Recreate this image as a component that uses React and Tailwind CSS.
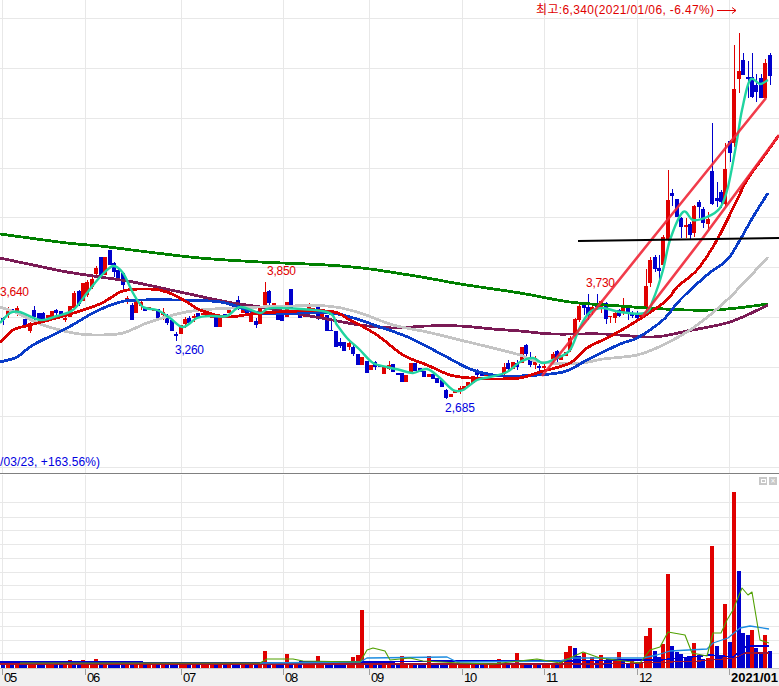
import React from "react";

const RED = "#e00000";
const BLUE = "#0000cc";

const gridX = [2, 85, 181, 283, 369, 462, 544, 637, 729];
const priceGridY = [18, 68, 118, 168, 217, 267, 317, 367, 416, 467];
const volumeGridY = [502, 517, 530, 544, 558, 572, 585, 599, 612, 626, 640, 653];

// color (1 red, 0 blue), body top, body bottom, wick top, wick bottom
const candles = [
  [0,318,320,317,325],[1,310,315,307,318],[0,309,313],[1,308,313,306,316],[0,312,314],[0,319,327],[1,323,331,322,333],[0,310,317,306,320],
  [0,313,320],[0,313,320,312,322],[1,315,318],[1,311,317],[0,310,313,309,315],[0,311,317],[1,318,320,315,322],[1,306,317],
  [1,293,308,291,310],[0,291,304,290,306],[1,283,301],[1,282,295,280,297],[1,279,287,277,289],[1,268,274,266,278],[0,257,275],[1,257,275],
  [0,250,265],[0,263,272,262,277],[0,270,278,268,281],[0,273,285,272,290],[1,298,300,296,304],[0,305,320,303,320],[1,301,313],[1,302,306,300,310],
  [0,308,311],[1,307,309],[1,309,311],[0,309,319],[1,312,315,308,320],[0,316,323,314,325],[0,320,331],[0,334,336,332,341],
  [1,325,334],[1,319,324,317,328],[0,318,323,316,325],[1,316,318,314,322],[0,313,317],[1,313,315],[1,312,317],[1,313,318],
  [0,317,327],[1,317,327],[0,314,318],[1,308,313],[0,302,308],[0,300,308,296,310],[1,305,313],[0,308,315],[1,315,322],[0,321,325,318,328],
  [1,308,324],[1,292,307,282,310],[0,291,303,290,305],[1,303,306],[0,315,320],[0,315,321],[1,302,317],[0,289,309],
  [1,310,313],[0,308,318],[1,313,317],[1,307,313,303,315],[1,308,312],[0,305,318,304,320],[1,313,318],[0,315,331],
  [0,330,331,318,331],[0,331,347],[0,342,346,338,348],[0,342,351],[1,343,347,340,350],[0,347,354,345,356],[0,354,365],[1,357,365],
  [0,361,373],[1,365,370],[0,362,367,361,370],[0,365,367],[1,367,374],[1,365,369,361,370],[0,364,372],[0,373,375],
  [0,373,382],[1,375,382],[1,363,372],[0,363,371],[0,368,372],[0,371,377],[1,374,377],[0,374,379],
  [0,378,383],[0,380,387],[0,390,398,389,399],[1,394,397],[1,391,393],[1,388,390,386,394],[1,386,389],[1,382,386],
  [1,376,383],[0,371,375,369,378],[0,373,376],[1,373,376],[1,374,376],[1,375,377],[0,374,377],[1,367,374,363,376],
  [0,363,369,360,372],[1,362,369],[0,363,367,360,370],[1,347,363],
  [0,345,354,344,356],[0,359,365,352,367],[1,358,365,356,369],[0,366,368,364,371],[1,366,368,363,371],[1,361,364],[1,354,359,352,362],[0,351,359,350,363],
  [1,355,360],[1,352,356],[1,338,350,336,352],[1,319,336,318,338],[1,306,320,303,322],[0,305,308,303,315],[0,307,315,294,320],[1,307,311,305,315],
  [0,303,307,294,310],[1,301,307,300,313],[0,303,319,302,324],[1,316,317,316,323],[1,313,318,312,323],[0,310,316,309,317],[1,308,313,298,315],[0,308,312,306,320],
  [0,314,316,311,318],[0,314,318,311,319],[1,315,317,313,318],[1,286,308,269,310],[1,260,283,257,287],[0,257,269,255,272],[0,268,271,255,279],[1,237,265,235,268],
  [1,200,239,170,241],[0,193,196,189,206],[0,199,217],[0,218,227,217,238],[1,225,227,218,238],[0,224,235,222,240],[1,206,233,205,237],[0,202,207,200,218],
  [0,209,223,207,228],[1,219,224,212,229],[0,171,204,123,205],[0,198,201,182,207],[0,192,202,190,208],[1,169,204,143,206],[0,141,153,140,162],[1,89,143,45,147],
  [1,71,79,33,93],[0,60,75,53,75],[0,77,79,61,98],[0,77,97,53,98],[0,85,92,74,102],[0,78,98,74,98],[1,63,98,59,98],[0,55,76,53,85],
];

// bars read off by hand: index -> [color, height]
const tallBars = {
  7: [1, 7], 15: [1, 8], 18: [1, 8], 21: [1, 9], 16: [0, 7], 59: [1, 17], 64: [1, 14], 71: [1, 12], 79: [1, 11], 80: [1, 13], 81: [1, 58],
  90: [1, 12], 96: [1, 12], 112: [1, 9], 116: [1, 15],
  126: [1, 7], 127: [1, 16], 128: [1, 22], 129: [0, 20], 130: [0, 12], 131: [1, 15], 132: [0, 8], 133: [1, 11], 134: [0, 7], 135: [1, 13],
  136: [0, 7], 137: [0, 7], 138: [1, 9], 139: [1, 16], 140: [0, 9], 141: [0, 5], 142: [1, 7], 143: [0, 4], 144: [1, 6], 145: [1, 32],
  146: [1, 40], 147: [0, 17], 148: [0, 11], 149: [1, 24], 150: [1, 94], 151: [0, 22], 152: [0, 16], 153: [0, 14], 154: [0, 11], 155: [0, 11],
  156: [1, 25], 157: [0, 12], 158: [0, 9], 159: [1, 10], 160: [1, 122], 161: [0, 22], 162: [0, 11], 163: [1, 64], 164: [0, 26], 165: [1, 176],
  166: [0, 97], 167: [0, 35], 168: [0, 33], 169: [1, 38], 170: [0, 20], 171: [0, 15], 172: [1, 33], 173: [0, 17],
};

const xOf = (i) => Math.round(3.3 + 4.43 * i);

// smooth line through points
function smooth(points) {
  let d = `M${points[0][0]} ${points[0][1]}`;
  for (let i = 0; i < points.length - 1; i++) {
    const p0 = points[i - 1] || points[i];
    const p1 = points[i];
    const p2 = points[i + 1];
    const p3 = points[i + 2] || p2;
    const c1x = p1[0] + (p2[0] - p0[0]) / 6;
    const c1y = p1[1] + (p2[1] - p0[1]) / 6;
    const c2x = p2[0] - (p3[0] - p1[0]) / 6;
    const c2y = p2[1] - (p3[1] - p1[1]) / 6;
    d += ` C${c1x.toFixed(1)} ${c1y.toFixed(1)} ${c2x.toFixed(1)} ${c2y.toFixed(1)} ${p2[0]} ${p2[1]}`;
  }
  return d;
}

const straight = (points) => "M" + points.map((p) => p.join(" ")).join("L");

const greenMa = [[0,234],[67,243],[100,246],[140,251],[200,258],[260,262],[327,265],[370,269],[427,278],[460,284],[520,293],[570,302],[620,306],[647,308],[687,310],[713,310],[737,308],[768,304]];
const purpleMa = [[0,258],[33,265],[67,272],[100,277],[133,282],[180,292],[227,302],[260,307],[293,313],[327,319],[360,325],[393,328],[427,326],[460,326],[493,329],[520,331],[553,334],[603,334],[653,337],[687,331],[730,322],[768,305]];
const grayMa = [[0,307],[17,313],[40,324],[60,330],[80,334],[100,335],[123,333],[147,323],[173,315],[200,310],[260,307],[327,306],[360,313],[393,325],[427,332],[460,340],[493,348],[520,355],[540,362],[580,363],[603,359],[637,355],[663,345],[693,328],[727,300],[768,257]];
const blueMa = [[0,362],[17,357],[33,345],[67,328],[93,313],[117,303],[140,300],[210,301],[233,305],[260,313],[327,313],[350,317],[380,327],[410,338],[443,355],[470,369],[493,375],[520,376],[563,372],[587,360],[620,344],[637,338],[663,320],[680,300],[707,275],[727,260],[740,240],[753,217],[768,193]];
const redMa = [[0,343],[13,330],[30,325],[67,315],[100,304],[123,291],[150,289],[167,292],[187,302],[200,310],[227,317],[260,313],[327,311],[350,320],[377,335],[403,355],[427,365],[450,375],[470,378],[487,379],[520,378],[540,372],[570,363],[587,348],[613,335],[643,317],[667,300],[677,287],[697,270],[717,240],[737,200],[747,180],[767,152],[779,135]];
const tealMa = [[0,323],[10,313],[20,312],[40,320],[57,316],[73,310],[87,293],[100,277],[113,266],[123,273],[133,293],[143,307],[157,310],[170,318],[183,327],[197,318],[210,316],[227,316],[240,307],[260,313],[267,309],[280,308],[327,312],[337,325],[347,338],[360,350],[373,363],[387,367],[400,370],[413,373],[427,369],[440,378],[453,390],[463,390],[477,380],[490,377],[507,372],[520,362],[533,358],[543,363],[557,358],[570,350],[580,327],[590,312],[603,308],[620,312],[645,313],[653,300],[663,270],[670,240],[683,212],[693,220],[707,217],[720,208],[728,187],[737,140],[742,110],[750,80],[760,84],[768,80]];

const volNavy = [[0,662],[142,662],[143,663],[367,662],[460,661],[560,661],[627,660],[660,660],[710,655],[733,657],[747,646],[769,646]];
const volRed = [[0,664],[400,664],[600,664],[640,663],[700,661],[735,658],[745,653],[769,653]];
const volSky = [[260,663],[360,662],[367,658],[447,657],[457,662],[560,661],[573,658],[643,658],[657,655],[670,651],[707,649],[713,643],[728,638],[740,628],[750,626],[769,629]];
const volGreen = [[20,663],[140,663],[260,663],[267,659],[293,659],[303,661],[360,662],[367,650],[373,648],[385,651],[390,660],[410,658],[423,661],[460,663],[493,664],[537,659],[560,663],[570,658],[583,652],[600,658],[640,663],[650,650],[660,647],[668,632],[685,635],[692,653],[707,656],[713,633],[721,633],[727,620],[733,610],[742,588],[748,595],[752,592],[760,640],[769,643]];

const months = [
  { label: "05", width: "w-[83px]" },
  { label: "06", width: "w-[96px]" },
  { label: "07", width: "w-[102px]" },
  { label: "08", width: "w-[86px]" },
  { label: "09", width: "w-[93px]" },
  { label: "10", width: "w-[82px]" },
  { label: "11", width: "w-[93px]" },
  { label: "12", width: "w-[92px]" },
  { label: "2021/01", width: "w-[50px]", bold: true },
];

function Grid({ ys, top, bottom }) {
  return (
    <g stroke="#e8e8e8" shapeRendering="crispEdges">
      {ys.map((y) => (
        <line key={y} x1="0" x2="779" y1={y + 0.5} y2={y + 0.5} />
      ))}
      {gridX.map((x) => (
        <line key={x} x1={x + 0.5} x2={x + 0.5} y1={top} y2={bottom} />
      ))}
    </g>
  );
}

function Candles() {
  return (
    <g shapeRendering="crispEdges">
      {candles.map((c, i) => {
        const x = xOf(i);
        const color = c[0] ? RED : BLUE;
        const hi = c[3] === undefined ? c[1] : c[3];
        const lo = c[4] === undefined ? c[2] : c[4];
        return (
          <g key={i}>
            <rect x={x} y={hi} width="1" height={lo - hi} fill={color} />
            <rect x={x - 2} y={c[1]} width="4" height={Math.max(c[2] - c[1], 1)} fill={color} />
          </g>
        );
      })}
    </g>
  );
}

function Line({ points, color, width = 2, rough, flat }) {
  return (
    <path
      d={flat ? straight(points) : smooth(points)}
      fill="none"
      stroke={color}
      strokeWidth={width}
      strokeLinejoin="round"
      shapeRendering={rough ? "crispEdges" : "auto"}
    />
  );
}

function Label({ x, y, w, children }) {
  return (
    <text x={x} y={y} textLength={w} lengthAdjust="spacing">
      {children}
    </text>
  );
}

function PriceChart() {
  return (
    <svg width="779" height="473" viewBox="0 0 779 473" className="block shrink-0 font-['Liberation_Sans','Noto_Sans_CJK_KR',sans-serif] text-[12px]">
      <Grid ys={priceGridY} top={0} bottom={473} />
      <Candles />
      <Line points={greenMa} color="#008000" width={2.8} rough />
      <Line points={purpleMa} color="#7a1a55" width={2.8} rough />
      <Line points={grayMa} color="#c4c4c4" width={2.8} rough />
      <Line points={blueMa} color="#0a3cc8" width={2.8} rough />
      <Line points={redMa} color="#d80000" width={2.8} rough />
      <Line points={tealMa} color="#20d4a0" width={2.4} />
      <g stroke="#f02838" strokeWidth="2.6" opacity="0.9" fill="none">
        <polyline points="542,376 652,239 766,98" />
        <polyline points="642,317 702,239 779,135" />
      </g>
      <line x1="578" y1="241" x2="779" y2="238" stroke="#000" strokeWidth="2" />
      <g className="fill-[#e00000]">
        <Label x={536} y={14} w={178}>최고:6,340(2021/01/06, -6.47%)</Label>
        <Label x={0} y={296} w={29}>3,640</Label>
        <Label x={267} y={275} w={29}>3,850</Label>
        <Label x={586} y={287} w={29}>3,730</Label>
      </g>
      <path d="M717 10.5H736M732 7.5l4 3-4 3" fill="none" stroke="#e00000" />
      <g className="fill-[#0000e0]">
        <Label x={175} y={354} w={29}>3,260</Label>
        <Label x={445} y={412} w={30}>2,685</Label>
        <Label x={0} y={466} w={100}>/03/23, +163.56%)</Label>
      </g>
    </svg>
  );
}

function VolumeChart() {
  return (
    <div className="relative h-[194px] shrink-0">
      <svg width="779" height="194" viewBox="0 474 779 194" className="block">
        <Grid ys={volumeGridY} top={475} bottom={668} />
        <g shapeRendering="crispEdges">
          {candles.map((c, i) => {
            const bar = tallBars[i] || [c[0], 3 + ((i * 7) % 3)];
            return <rect key={i} x={xOf(i) - 2} y={668 - bar[1]} width="4" height={bar[1]} fill={bar[0] ? RED : BLUE} />;
          })}
        </g>
        <Line points={volNavy} color="#0000d0" width={1.6} flat rough />
        <Line points={volRed} color="#a01030" width={1.2} flat rough />
        <Line points={volSky} color="#1c8ce0" width={1.3} flat />
        <Line points={volGreen} color="#50a000" width={1.1} flat />
      </svg>
      <div className="absolute right-[2px] top-[3px] flex gap-[2px]">
        <div className="flex h-[8px] w-[8px] items-center justify-center bg-[#c8c8c8]">
          <div className="h-[4px] w-[5px] border border-white"></div>
        </div>
        <div className="flex h-[8px] w-[8px] items-center justify-center bg-[#c8c8c8] text-[8px] leading-none text-white">×</div>
      </div>
    </div>
  );
}

export default function App() {
  return (
    <div className="flex h-[686px] w-[779px] flex-col overflow-hidden bg-white">
      <PriceChart />
      <div className="h-px shrink-0 bg-[#808080]"></div>
      <VolumeChart />
      <div className="flex h-[18px] shrink-0 border-t border-[#c8c8c8] bg-[#f0f0f0] pl-[2px] font-['Liberation_Sans',sans-serif] text-[13px] leading-[18px] tracking-[-1.2px] text-black">
        {months.map((m) => (
          <div key={m.label} className={`flex ${m.width} shrink-0`}>
            <div className="h-[6px] w-px bg-[#a0a0a0]"></div>
            <span className={m.bold ? "ml-px whitespace-nowrap font-bold tracking-normal" : "ml-px"}>{m.label}</span>
          </div>
        ))}
      </div>
    </div>
  );
}
